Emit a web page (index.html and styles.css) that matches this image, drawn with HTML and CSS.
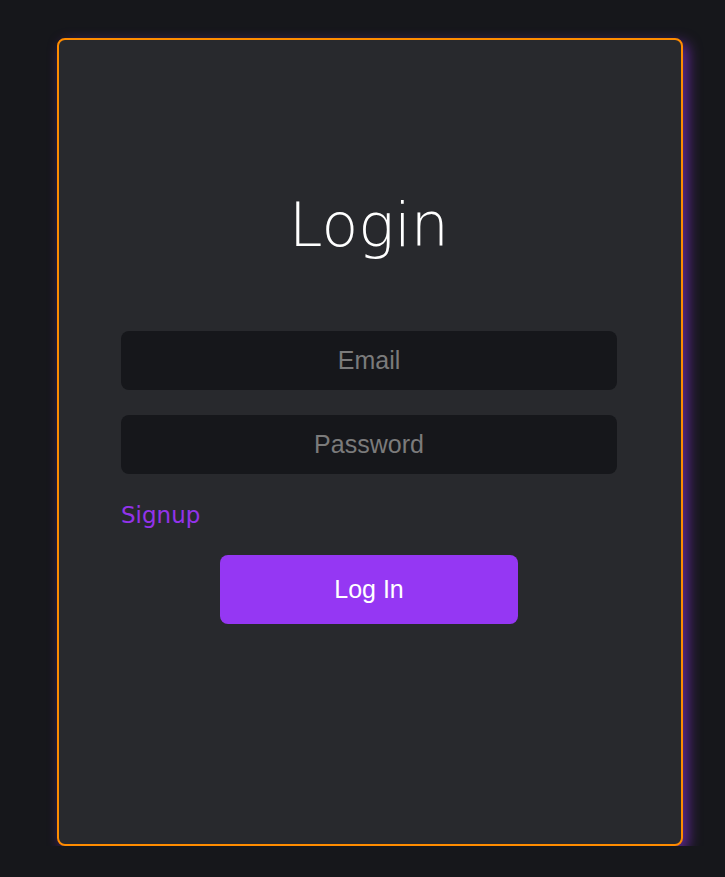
FILE: index.html
```html
<!DOCTYPE html>
<html lang="en">
<head>
  <meta charset="UTF-8">
  <title>Login</title>
  <link rel="stylesheet" href="styles.css">
</head>
<body>
  <div class="card">
    <h1 class="title">Login</h1>
    <form class="login-form">
      <input class="field" type="email" placeholder="Email">
      <input class="field" type="password" placeholder="Password">
      <a class="signup" href="#">Signup</a>
      <button class="submit" type="button">Log In</button>
    </form>
  </div>
</body>
</html>
```
FILE: styles.css
```css
body {
  margin: 0;
  background-color: #16171b;
  font-family: 'Liberation Sans', Arial, sans-serif;
}

.card {
  box-sizing: border-box;
  width: 626px;
  height: 808px;
  margin: 38px 0 0 57px;
  padding: 145px 64px 0 62px;
  background-color: #28292d;
  border: 2px solid #ff8c00;
  border-radius: 8px;
  box-shadow: 5px 5px 14px rgba(147, 51, 234, 0.6);
}

.title {
  margin: 0 0 66px;
  font-family: 'DejaVu Sans', sans-serif;
  font-weight: 200;
  font-size: 60px;
  line-height: 80px;
  color: #fff;
  text-align: center;
}

.login-form {
  display: flex;
  flex-direction: column;
}

.field {
  box-sizing: border-box;
  height: 59px;
  padding: 0;
  margin-bottom: 25px;
  border: none;
  border-radius: 8px;
  background-color: #16171b;
  color: #ddd;
  font-family: 'Liberation Sans', Arial, sans-serif;
  font-size: 25px;
  text-align: center;
  outline: none;
}

.field::placeholder {
  color: #7b7b7b;
}

.login-form .field:nth-of-type(2) {
  margin-bottom: 28px;
}

.signup {
  align-self: flex-start;
  font-family: 'DejaVu Sans', sans-serif;
  font-size: 23px;
  color: #9333ea;
  text-decoration: none;
}

.submit {
  align-self: center;
  width: 298px;
  height: 69px;
  margin-top: 27px;
  border: none;
  border-radius: 8px;
  background-color: #9537f3;
  color: #fff;
  font-family: 'Liberation Sans', Arial, sans-serif;
  font-size: 25px;
  cursor: pointer;
}
```
